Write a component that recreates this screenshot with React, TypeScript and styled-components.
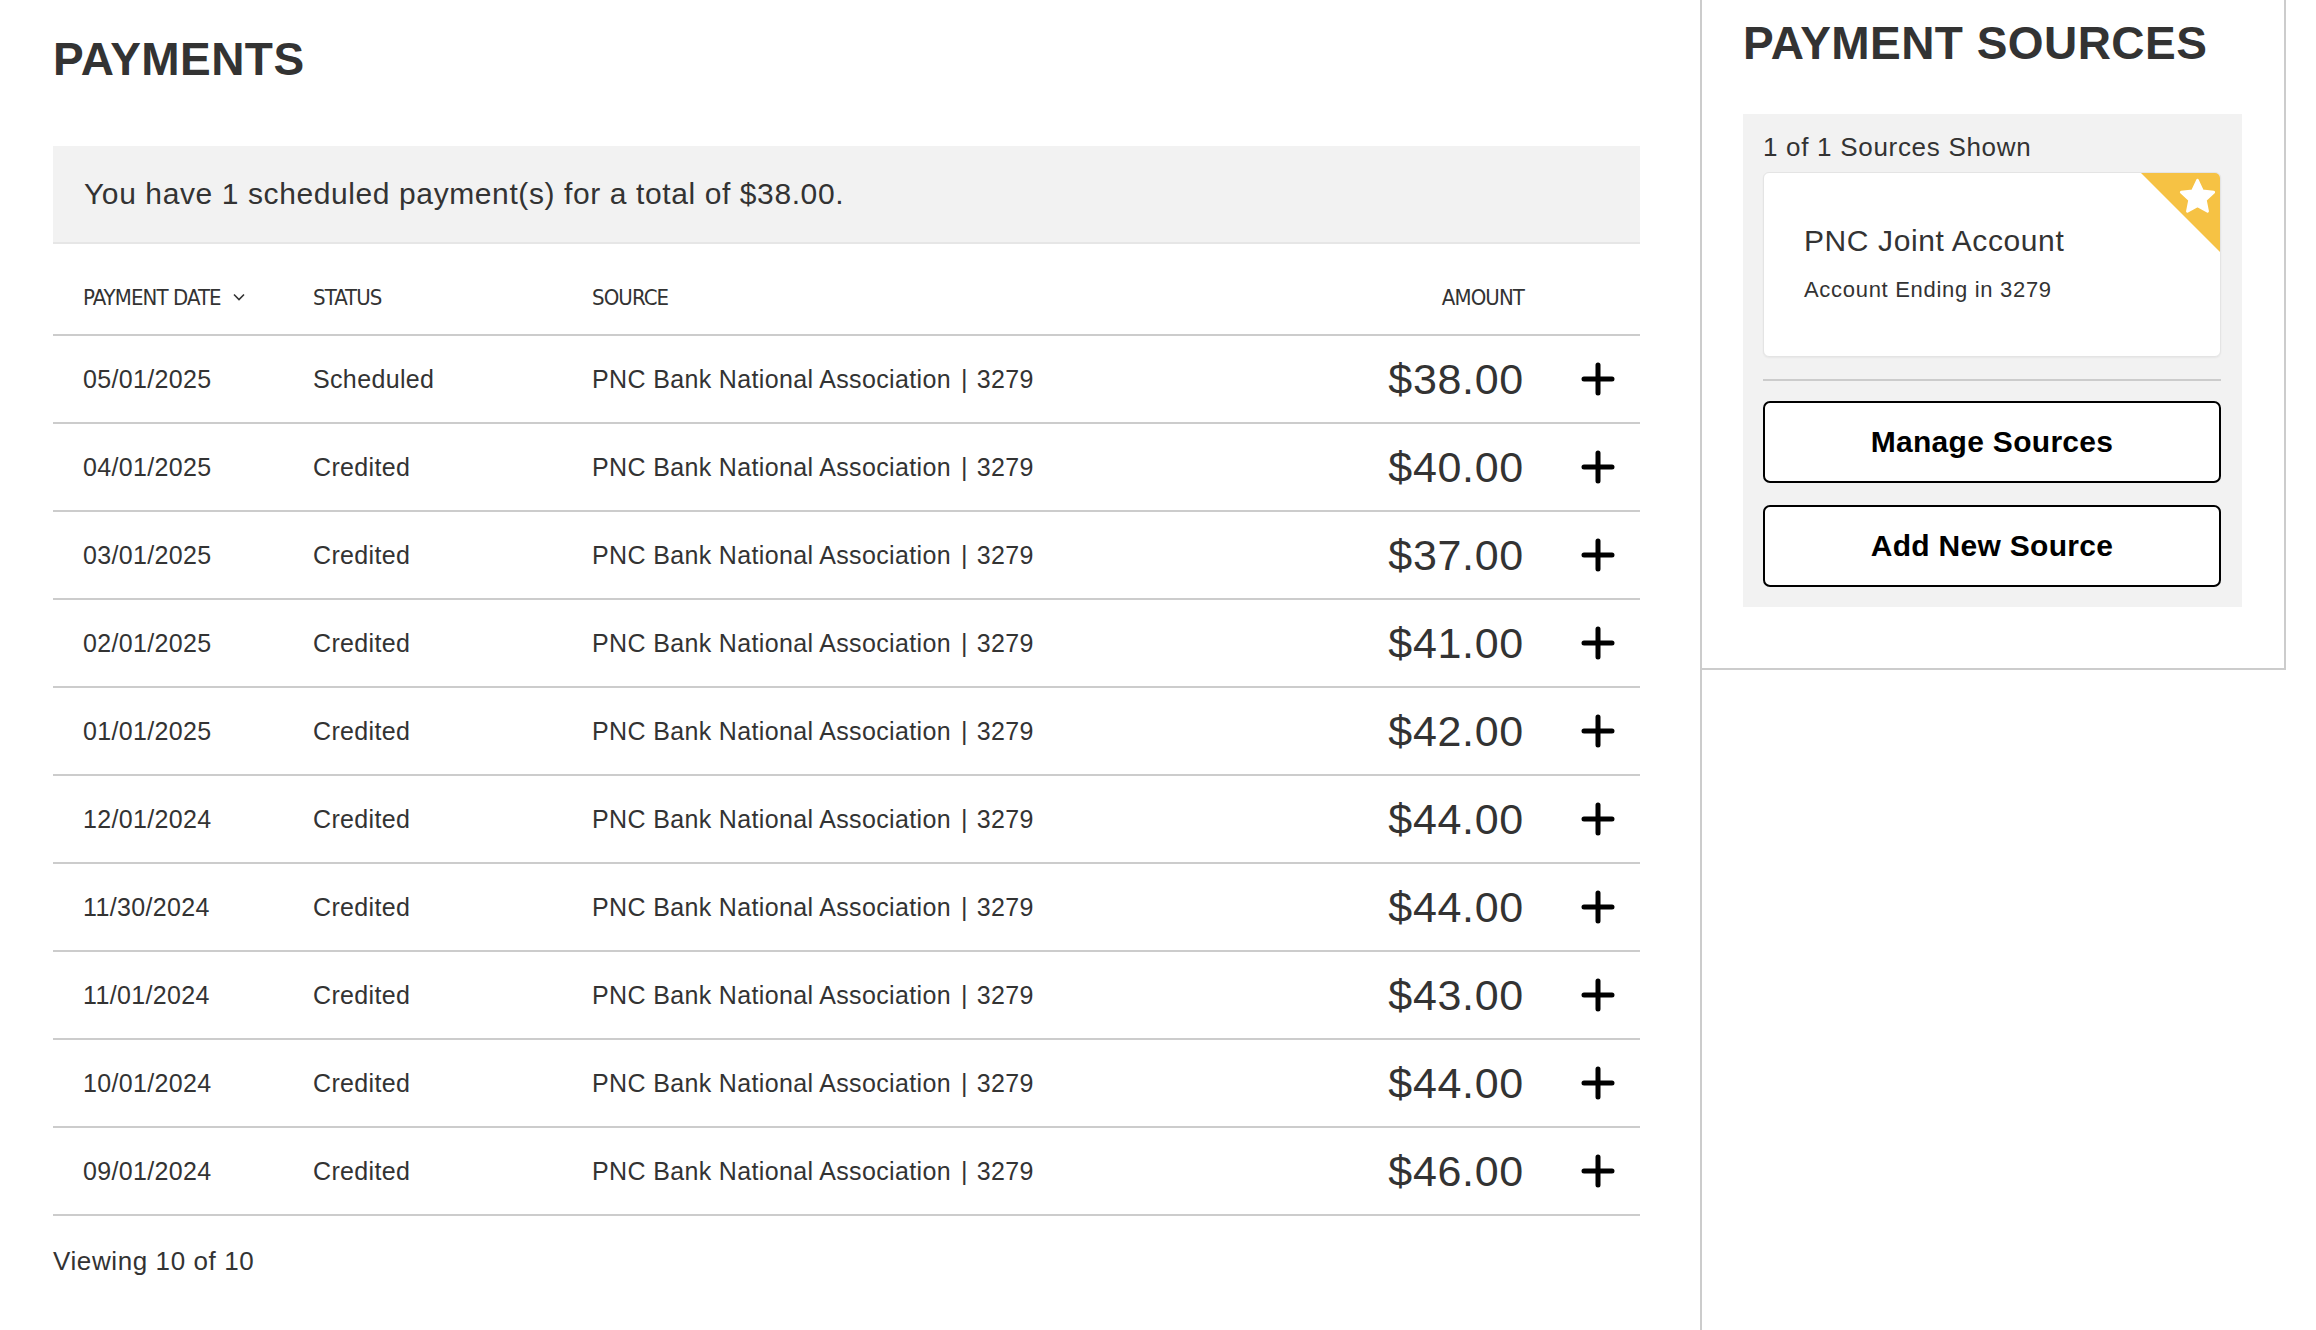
import styled, { createGlobalStyle } from "styled-components"

const GlobalStyle = createGlobalStyle`
  html, body {
    margin: 0;
    padding: 0;
    background: #fff;
  }
  body {
    font-family: "Liberation Sans", Arial, sans-serif;
    color: #333;
  }
  * {
    box-sizing: border-box;
  }
`

const Page = styled.div`
  display: grid;
  grid-template-columns: 1700px 586px;
  min-height: 100vh;
`

const Main = styled.main`
  padding: 36px 60px 40px 53px;
`

const Heading = styled.h1`
  margin: 0;
  font-size: 46px;
  line-height: 1;
  font-weight: 700;
  letter-spacing: 0.45px;
  color: #333;
`

const SummaryBar = styled.div`
  margin-top: 64px;
  height: 98px;
  display: flex;
  align-items: center;
  padding-left: 31px;
  background: #f2f2f2;
  border-bottom: 2px solid #e6e6e6;
  font-size: 30px;
  letter-spacing: 0.6px;
`

const Table = styled.div`
  display: flex;
  flex-direction: column;
`

const Row = styled.div<{ $header?: boolean }>`
  display: grid;
  grid-template-columns: 230px 279px 1fr 180px 116px;
  align-items: center;
  height: ${({ $header }) => ($header ? 92 : 88)}px;
  padding-left: 30px;
  border-bottom: 2px solid #ccc;
`

const HeadCell = styled.div<{ $right?: boolean }>`
  display: flex;
  align-items: center;
  justify-content: ${({ $right }) => ($right ? "flex-end" : "flex-start")};
  gap: 12px;
  font-family: "Liberation Sans Narrow", "DejaVu Sans Condensed", "Liberation Sans", sans-serif;
  font-size: 22px;
  letter-spacing: -0.9px;
  color: #333;
  padding-top: 16px;
`

const Cell = styled.div`
  font-size: 25px;
  letter-spacing: 0.35px;
  color: #333;
  white-space: nowrap;
`

const Pipe = styled.span`
  margin: 0 9px 0 10px;
`

const Amount = styled.div`
  font-size: 43px;
  letter-spacing: 0.7px;
  color: #333;
  text-align: right;
`

const ExpandButton = styled.button`
  display: flex;
  align-items: center;
  justify-content: center;
  justify-self: end;
  margin-right: 25px;
  width: 34px;
  height: 34px;
  padding: 0;
  border: 0;
  background: none;
  cursor: pointer;
`

const Footer = styled.div`
  margin-top: 32px;
  font-size: 26px;
  line-height: 1;
  letter-spacing: 0.6px;
  color: #333;
`

const Sidebar = styled.aside`
  border-left: 2px solid #ccc;
`

const SourcesBox = styled.div`
  padding: 20px 42px 61px 41px;
  border-right: 2px solid #ccc;
  border-bottom: 2px solid #ccc;
`

const SourcesPanel = styled.div`
  margin-top: 48px;
  background: #f2f2f2;
  padding: 20px 21px 20px 20px;
  display: flex;
  flex-direction: column;
`

const ShownText = styled.div`
  font-size: 26px;
  line-height: 1;
  letter-spacing: 0.7px;
  color: #333;
`

const SourceCard = styled.div`
  position: relative;
  margin-top: 12px;
  height: 185px;
  padding: 53px 40px 0;
  background: #fff;
  border: 1px solid #e4e4e4;
  border-radius: 6px;
  overflow: hidden;
  box-shadow: 0 1px 2px rgba(0, 0, 0, 0.05);
`

const CardName = styled.div`
  font-size: 30px;
  line-height: 1;
  letter-spacing: 0.6px;
  color: #333;
`

const CardSub = styled.div`
  margin-top: 23px;
  font-size: 22px;
  line-height: 1;
  letter-spacing: 0.7px;
  color: #333;
`

const Ribbon = styled.div`
  position: absolute;
  top: 0;
  right: 0;
  width: 79px;
  height: 79px;
  background: #f6c244;
  clip-path: polygon(0 0, 100% 0, 100% 100%);

  svg {
    position: absolute;
    top: 3px;
    right: 2px;
  }
`

const Divider = styled.hr`
  margin: 22px 0 0;
  border: 0;
  border-top: 2px solid #ccc;
`

const OutlineButton = styled.button<{ $first?: boolean }>`
  margin-top: ${({ $first }) => ($first ? 20 : 22)}px;
  height: 82px;
  background: #fff;
  border: 2px solid #000;
  border-radius: 7px;
  font-family: "Liberation Sans", Arial, sans-serif;
  font-size: 30px;
  font-weight: 700;
  letter-spacing: 0.3px;
  color: #000;
  cursor: pointer;
`

const payments = [
  { date: "05/01/2025", status: "Scheduled", amount: "$38.00" },
  { date: "04/01/2025", status: "Credited", amount: "$40.00" },
  { date: "03/01/2025", status: "Credited", amount: "$37.00" },
  { date: "02/01/2025", status: "Credited", amount: "$41.00" },
  { date: "01/01/2025", status: "Credited", amount: "$42.00" },
  { date: "12/01/2024", status: "Credited", amount: "$44.00" },
  { date: "11/30/2024", status: "Credited", amount: "$44.00" },
  { date: "11/01/2024", status: "Credited", amount: "$43.00" },
  { date: "10/01/2024", status: "Credited", amount: "$44.00" },
  { date: "09/01/2024", status: "Credited", amount: "$46.00" },
]

const PlusIcon = () => (
  <svg width="34" height="34" viewBox="0 0 34 34" fill="none">
    <path d="M17 3v28M3 17h28" stroke="#000" strokeWidth="5" strokeLinecap="round" />
  </svg>
)

const Chevron = () => (
  <svg width="12" height="8" viewBox="0 0 12 8" fill="none">
    <path d="M1 1.5l5 5 5-5" stroke="#333" strokeWidth="1.6" />
  </svg>
)

const Star = () => (
  <svg width="41" height="41" viewBox="0 0 24 24">
    <path
      d="M12 2.5l2.9 6.2 6.6.8-4.9 4.6 1.3 6.6L12 17.4l-5.9 3.3 1.3-6.6-4.9-4.6 6.6-.8z"
      fill="#fff"
      stroke="#fff"
      strokeWidth="1.6"
      strokeLinejoin="round"
    />
  </svg>
)

export default function App() {
  return (
    <>
      <GlobalStyle />
      <Page>
        <Main>
          <Heading>PAYMENTS</Heading>
          <SummaryBar>You have 1 scheduled payment(s) for a total of $38.00.</SummaryBar>

          <Table>
            <Row $header>
              <HeadCell>
                PAYMENT DATE <Chevron />
              </HeadCell>
              <HeadCell>STATUS</HeadCell>
              <HeadCell>SOURCE</HeadCell>
              <HeadCell $right>AMOUNT</HeadCell>
              <div />
            </Row>
            {payments.map((p) => (
              <Row key={p.date}>
                <Cell>{p.date}</Cell>
                <Cell>{p.status}</Cell>
                <Cell>
                  PNC Bank National Association<Pipe>|</Pipe>3279
                </Cell>
                <Amount>{p.amount}</Amount>
                <ExpandButton aria-label="Show details">
                  <PlusIcon />
                </ExpandButton>
              </Row>
            ))}
          </Table>

          <Footer>Viewing 10 of 10</Footer>
        </Main>

        <Sidebar>
          <SourcesBox>
            <Heading>PAYMENT SOURCES</Heading>
            <SourcesPanel>
              <ShownText>1 of 1 Sources Shown</ShownText>
              <SourceCard>
                <Ribbon>
                  <Star />
                </Ribbon>
                <CardName>PNC Joint Account</CardName>
                <CardSub>Account Ending in 3279</CardSub>
              </SourceCard>
              <Divider />
              <OutlineButton $first>Manage Sources</OutlineButton>
              <OutlineButton>Add New Source</OutlineButton>
            </SourcesPanel>
          </SourcesBox>
        </Sidebar>
      </Page>
    </>
  )
}
